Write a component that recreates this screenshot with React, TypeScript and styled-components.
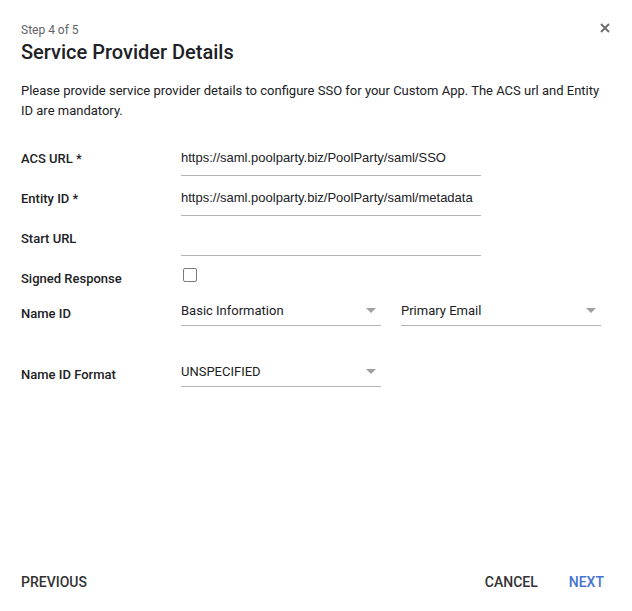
import React from "react"
import styled, { createGlobalStyle } from "styled-components"

const GlobalStyle = createGlobalStyle`
  * { box-sizing: border-box; }
  body {
    margin: 0;
    background: #fff;
    font-family: Roboto, "Noto Sans", sans-serif;
    color: #202124;
  }
`

interface Row {
  label: string,
  value?: string
}

const textRows: Row[] = [
  { label: "ACS URL *", value: "https://saml.poolparty.biz/PoolParty/saml/SSO" },
  { label: "Entity ID *", value: "https://saml.poolparty.biz/PoolParty/saml/metadata" },
  { label: "Start URL", value: "" }
]

const Arrow = () => (
  <svg width="10" height="5" viewBox="0 0 10 5">
    <path d="M0 0 L10 0 L5 5 Z" fill="#a0a0a0" />
  </svg>
)

function Select({ value, width }: { value: string, width: number }) {
  return (
    <SelectBox $width={width}>
      <span>{value}</span>
      <Arrow />
    </SelectBox>
  )
}

export default class App extends React.Component {
  render() {
    return (
      <>
        <GlobalStyle />
        <Dialog>
          <Header>
            <div>
              <Step>Step 4 of 5</Step>
              <Title>Service Provider Details</Title>
            </div>
            <CloseButton aria-label="Close">
              <svg width="10" height="10" viewBox="0 0 10 10">
                <path d="M1 1 L9 9 M9 1 L1 9" stroke="#6b6b6b" strokeWidth="1.8" />
              </svg>
            </CloseButton>
          </Header>

          <Description>
            Please provide service provider details to configure SSO for your Custom App. The ACS url and Entity ID are mandatory.
          </Description>

          <Form>
            {textRows.map(row => (
              <FieldRow key={row.label}>
                <Label>{row.label}</Label>
                <TextInput defaultValue={row.value} />
              </FieldRow>
            ))}
            <FieldRow>
              <Label>Signed Response</Label>
              <Checkbox />
            </FieldRow>
            <SelectRow>
              <Label>Name ID</Label>
              <SelectGroup>
                <Select value="Basic Information" width={200} />
                <Select value="Primary Email" width={200} />
              </SelectGroup>
            </SelectRow>
            <SelectRow $spaced>
              <Label>Name ID Format</Label>
              <Select value="UNSPECIFIED" width={200} />
            </SelectRow>
          </Form>

          <Footer>
            <Button>Previous</Button>
            <FooterRight>
              <Button>Cancel</Button>
              <Button $primary>Next</Button>
            </FooterRight>
          </Footer>
        </Dialog>
      </>
    )
  }
}

const Dialog = styled.div`
  width: 632px;
  height: 611px;
  display: flex;
  flex-direction: column;
  background: #fff;
`

const Header = styled.div`
  display: flex;
  justify-content: space-between;
  align-items: flex-start;
  padding: 22px 16px 0 21px;
`

const Step = styled.div`
  font-size: 12px;
  line-height: 16px;
  color: #5f6368;
`

const Title = styled.h1`
  margin: 2px 0 0;
  font-size: 20px;
  line-height: 24px;
  font-weight: 500;
  color: #202124;
`

const CloseButton = styled.button`
  width: 22px;
  height: 12px;
  padding: 0;
  border: none;
  background: none;
  display: flex;
  align-items: center;
  justify-content: center;
  cursor: pointer;
`

const Description = styled.p`
  margin: 17px 21px 0;
  font-size: 13px;
  line-height: 20px;
  color: #202124;
`

const Form = styled.div`
  display: flex;
  flex-direction: column;
  gap: 4px;
  margin-top: 19px;
  padding: 0 21px;
`

const FieldRow = styled.div`
  display: grid;
  grid-template-columns: 160px auto;
  align-items: center;
  height: 36px;
`

const SelectRow = styled.div<{ $spaced?: boolean }>`
  display: grid;
  grid-template-columns: 160px auto;
  align-items: center;
  height: 26px;
  margin-top: ${p => (p.$spaced ? "31px" : "0")};
`

const Label = styled.div`
  font-size: 13px;
  font-weight: 500;
  color: #202124;
`

const TextInput = styled.input`
  width: 300px;
  height: 36px;
  padding: 0;
  border: none;
  border-bottom: 1px solid #b4b4b4;
  outline: none;
  background: transparent;
  font-family: "Liberation Sans", Arial, sans-serif;
  font-size: 13px;
  color: #202124;
`

const Checkbox = styled.span`
  display: block;
  width: 14px;
  height: 14px;
  margin: 0 0 6px 2px;
  border: 1.5px solid #7a7a7a;
  border-radius: 2px;
`

const SelectGroup = styled.div`
  display: flex;
  gap: 20px;
`

const SelectBox = styled.div<{ $width: number }>`
  width: ${p => p.$width}px;
  height: 26px;
  display: flex;
  align-items: center;
  justify-content: space-between;
  padding: 0 5px 5px 0;
  border-bottom: 1px solid #b4b4b4;
  font-size: 13px;
  color: #202124;
`

const Footer = styled.div`
  margin-top: auto;
  display: flex;
  justify-content: space-between;
  align-items: center;
  padding: 0 20px 11px 13px;
`

const FooterRight = styled.div`
  display: flex;
  gap: 15px;
`

const Button = styled.button<{ $primary?: boolean }>`
  height: 36px;
  padding: 0 8px;
  border: none;
  background: none;
  font-family: Roboto, sans-serif;
  font-size: 14px;
  font-weight: 500;
  text-transform: uppercase;
  color: ${p => (p.$primary ? "#4673cf" : "#333")};
  cursor: pointer;
`
